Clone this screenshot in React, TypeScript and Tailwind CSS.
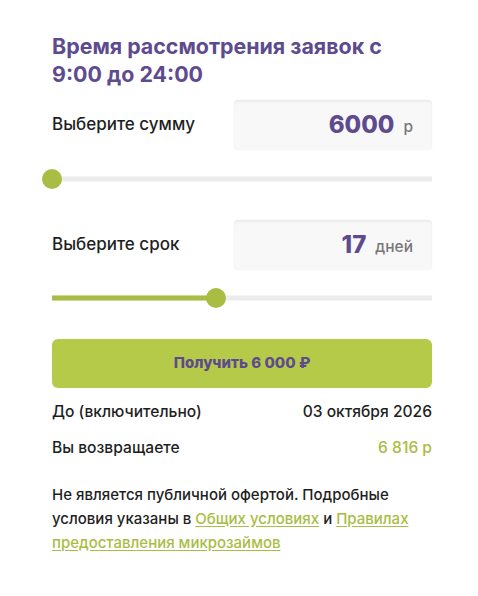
import { useState } from "react";

/* ── Slider ── */

function Slider({ percent }: { percent: number }) {
  return (
    <div className="relative h-5">
      <div className="absolute left-0 right-0 top-1/2 h-[5px] -translate-y-1/2 bg-[#ececec]" />
      <div
        className="absolute left-0 top-1/2 h-[5px] -translate-y-1/2 bg-[#a9bd44]"
        style={{ width: `${percent}%` }}
      />
      <div
        className="absolute top-1/2 h-5 w-5 -translate-x-1/2 -translate-y-1/2 rounded-full bg-[#a9bd44]"
        style={{ left: `${percent}%` }}
      />
    </div>
  );
}

/* ── Value row ── */

function ValueRow({
  label,
  value,
  unit,
}: {
  label: string;
  value: string;
  unit: string;
}) {
  return (
    <div className="flex items-center justify-between">
      <span className="text-[17px] font-medium text-[#1f1f1f]">{label}</span>
      <div className="flex h-[50px] w-[198px] items-center justify-end gap-[9px] rounded-[4px] bg-[#f8f8f8] pr-[19px] shadow-[inset_0_2px_2px_rgba(0,0,0,0.05),0_0_2px_rgba(0,0,0,0.06)]">
        <span className="text-[24px] font-extrabold text-[#5e4b8e]">
          {value}
        </span>
        <span className="pt-1 text-[15.5px] font-medium text-[#777]">
          {unit}
        </span>
      </div>
    </div>
  );
}

/* ── Main ── */

export default function App() {
  const [sum] = useState(6000);
  const [days] = useState(17);

  return (
    <div
      className="min-h-[596px] w-[478px] bg-white pl-[52px] pr-[46px] pt-[32px]"
      style={{ fontFamily: "Inter, 'Noto Sans', sans-serif" }}
    >
      <h1 className="text-[21.4px] font-bold leading-[28px] text-[#5e4b8e]">
        Время рассмотрения заявок с<br />9:00 до 24:00
      </h1>

      <div className="mt-[12px]">
        <ValueRow label="Выберите сумму" value={String(sum)} unit="р" />
      </div>
      <div className="mt-[19px]">
        <Slider percent={0} />
      </div>

      <div className="mt-[31px]">
        <ValueRow label="Выберите срок" value={String(days)} unit="дней" />
      </div>
      <div className="mt-[18px]">
        <Slider percent={43.2} />
      </div>

      <button className="mt-[31px] flex h-[49px] w-full items-center justify-center rounded-[6px] bg-[#b6ca4a] text-[15px] font-extrabold text-[#5e4b8e]">
        Получить 6 000 ₽
      </button>

      <div className="mt-[12px] flex items-center justify-between text-[15.6px] font-medium text-[#1f1f1f]">
        <span>До (включительно)</span>
        <span>03 октября 2026</span>
      </div>
      <div className="mt-[13px] flex items-center justify-between text-[15.6px] font-medium">
        <span className="text-[#1f1f1f]">Вы возвращаете</span>
        <span className="text-[#a9bd44]">6 816 р</span>
      </div>

      <p className="mt-[23px] text-[15px] font-medium leading-[24px] text-[#1f1f1f]">
        Не является публичной офертой. Подробные условия указаны в{" "}
        <a href="#" className="text-[#a9bd44] underline underline-offset-2">
          Общих условиях
        </a>{" "}
        и{" "}
        <a href="#" className="text-[#a9bd44] underline underline-offset-2">
          Правилах предоставления микрозаймов
        </a>
      </p>
    </div>
  );
}
